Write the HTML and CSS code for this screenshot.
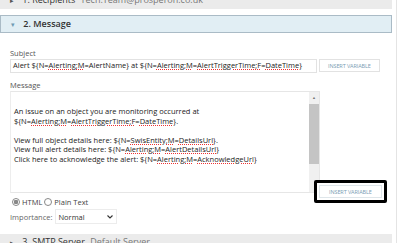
FILE: index.html
```html
<!DOCTYPE html>
<html lang="en">
<head>
  <meta charset="UTF-8" />
  <title>Alert Action - Send Email</title>
  <link rel="stylesheet" href="styles.css">
</head>
<body>
  <div class="page">
    <div class="section collapsed first">
      <span class="arrow">&#9656;</span>
      <span class="title">1. Recipients</span>
      <span class="summary">Tech.Team@prosperon.co.uk</span>
    </div>

    <div class="section open">
      <span class="arrow">&#9662;</span>
      <span class="title">2. Message</span>
    </div>

    <div class="body">
      <div class="label">Subject</div>
      <div class="row">
        <div class="subject">Alert ${N=<span class="sp">Alerting;M</span>=AlertName} at ${N=<span class="sp">Alerting;M</span>=<span class="sp">AlertTriggerTime;F</span>=<span class="sp">DateTime</span>}</div>
        <button class="insert">INSERT VARIABLE</button>
      </div>

      <div class="label msg-label">Message</div>
      <div class="row">
        <div class="message">
          <div class="text">
            <p>An issue on an object you are monitoring occurred at<br>${N=<span class="sp">Alerting;M</span>=<span class="sp">AlertTriggerTime;F</span>=<span class="sp">DateTime</span>}.</p>
            <p>View full object details here: ${N=<span class="sp">SwisEntity;M</span>=<span class="sp">DetailsUrl</span>}.<br>View full alert details here: ${N=<span class="sp">Alerting;M</span>=<span class="sp">AlertDetailsUrl</span>}<br>Click here to acknowledge the alert: ${N=<span class="sp">Alerting;M</span>=<span class="sp">AcknowledgeUrl</span>}</p>
          </div>
          <div class="scrollbar">
            <span class="up">&#9650;</span>
            <span class="thumb"></span>
          </div>
        </div>
        <div class="focus-box">
          <button class="insert">INSERT VARIABLE</button>
        </div>
      </div>

      <div class="format">
        <label><input type="radio" name="fmt" checked> HTML</label>
        <label><input type="radio" name="fmt"> Plain Text</label>
      </div>
      <div class="importance">
        Importance:
        <span class="select">
          <select><option>Normal</option></select>
          <svg width="6" height="4" viewBox="0 0 6 4"><path d="M0.5 0.5 L3 3 L5.5 0.5" fill="none" stroke="#333" stroke-width="1.1"/></svg>
        </span>
      </div>
    </div>

    <div class="section collapsed">
      <span class="arrow">&#9656;</span>
      <span class="title">3. SMTP Server</span>
      <span class="summary">Default Server</span>
    </div>
  </div>
</body>
</html>
```

FILE: styles.css
```css
body {
  margin: 0;
  font-family: 'Open Sans', sans-serif;
  color: #333;
  background: #fff;
  overflow: hidden;
}
.page {
  width: 392px;
  height: 250px;
  border-right: 1px solid #e4e4e4;
  padding-right: 4px;
}
.section {
  height: 16px;
  line-height: 16px;
  font-size: 9px;
  padding-left: 10px;
  background: #ebebeb;
  white-space: nowrap;
}
.section.first {
  margin-top: -7px;
  line-height: 13px;
}
.section.open {
  margin-top: 6px;
  background: #e1eef4;
  border: 1px solid #aabbc6;
  color: #333;
}
.section .arrow {
  display: inline-block;
  width: 10px;
  font-size: 7px;
  color: #555;
}
.section.open .arrow {
  color: #6f9ab3;
}
.section .title {
  font-weight: 600;
}
.section.collapsed .title {
  font-weight: 500;
}
.section .summary {
  margin-left: 3px;
  color: #777;
}
.body {
  padding: 14px 0 10px 10px;
  font-size: 7.5px;
}
.label {
  color: #555;
  line-height: 12px;
}
.msg-label {
  margin-top: 6px;
}
.row {
  display: flex;
  align-items: flex-start;
}
.subject {
  width: 303px;
  height: 12px;
  line-height: 11px;
  padding-left: 2px;
  border: 1px solid #e2e2e2;
  white-space: nowrap;
  overflow: hidden;
  color: #222;
}
.sp {
  text-decoration: underline dotted #e33;
}
.insert {
  margin-left: 2px;
  height: 13px;
  padding: 0 8px;
  border: 1px solid #e2e2e2;
  background: #fff;
  color: #7a9db3;
  font-family: 'Open Sans', sans-serif;
  font-size: 5.5px;
  letter-spacing: -0.1px;
}
.message {
  display: flex;
  width: 308px;
  height: 100px;
  border: 1px solid #e6e6e6;
  border-left: 1px solid #ededed;
}
.message .text {
  flex: 1;
  padding: 15px 0 0 3px;
  color: #222;
  line-height: 9.5px;
}
.message p {
  margin: 0 0 9.5px;
}
.scrollbar {
  width: 10px;
  background: #f0f0f0;
  display: flex;
  flex-direction: column;
}
.scrollbar .up {
  height: 12px;
  font-size: 4px;
  text-align: center;
  line-height: 12px;
  color: #777;
}
.scrollbar .thumb {
  height: 60px;
  background: #c4c4c4;
}
.focus-box {
  margin: 89px 0 -10px -6px;
  border: 3px solid #000;
  border-radius: 2px;
  padding: 2px;
  background: #fff;
}
.focus-box .insert {
  margin: 0;
  padding: 0 9px;
  border-color: #dfe6ea;
}
.format {
  margin-top: 2px;
  display: flex;
  align-items: center;
  color: #444;
  line-height: 14px;
}
.format label {
  display: flex;
  align-items: center;
}
.format input {
  appearance: none;
  margin: 0 2px 0 2px;
  width: 8px;
  height: 8px;
  border: 1px solid #888;
  border-radius: 50%;
  background: #fff;
}
.format input:checked {
  background: radial-gradient(circle, #888 0 2px, #fff 2.5px);
}
.importance {
  color: #666;
  line-height: 14px;
  display: flex;
  align-items: center;
  gap: 3px;
}
.select {
  display: inline-flex;
  align-items: center;
  width: 60px;
  height: 13px;
  border: 1px solid #ececec;
  background: #fff;
}
.select select {
  appearance: none;
  flex: 1;
  border: none;
  background: none;
  padding: 0 2px;
  font-family: 'Open Sans', sans-serif;
  font-size: 7.5px;
  color: #333;
}
.select svg {
  margin-right: 3px;
}
```
